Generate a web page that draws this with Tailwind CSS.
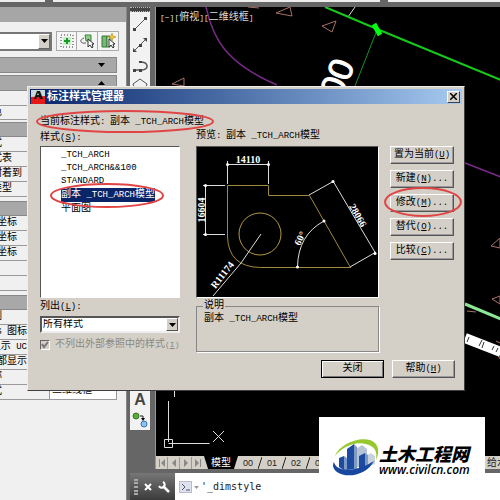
<!DOCTYPE html>
<html lang="zh-CN">
<head>
<meta charset="utf-8">
<title>标注样式管理器</title>
<script src="https://cdn.jsdelivr.net/npm/@tailwindcss/browser@4"></script>
</head>
<body class="bg-[#666] text-black text-[10px] leading-3 font-['Liberation_Mono','Noto_Sans_CJK_SC',sans-serif]">
<div class="relative flex h-screen flex-col overflow-hidden">
  <!-- application frame -->
  <div class="flex h-[2px] shrink-0 gap-2 bg-[#666]">
    <div class="w-[45px] bg-[#eee]"></div><div class="flex-1 bg-[#eee]"></div><div class="w-[112px] bg-[#eee]"></div>
  </div>
  <div class="flex min-h-0 flex-1 pt-[5px]">

    <!-- properties palette -->
    <aside class="flex w-[127px] shrink-0 flex-col overflow-hidden border-r border-[#888] bg-[#f0f0f0]">
      <div class="h-[15px] shrink-0 bg-[#a6a6a6]"></div>
      <div class="mt-[9px] flex h-5 shrink-0 items-center">
        <label class="relative block w-[52px]">
          <select aria-label="对象类型" class="block h-[19px] w-full appearance-none border-2 border-l-0 border-[#777] bg-white"><option></option></select>
          <span class="pointer-events-none absolute inset-y-[2px] right-[2px] flex w-3 items-center justify-center border border-t-white border-l-white border-r-[#666] border-b-[#666] bg-[#d4d0c8]"><svg class="w-[7px] h-1" viewBox="0 0 7 4"><path d="M0 0h7L3.500 4z"/></svg></span>
        </label>
        <div class="ml-1 flex border border-[#aaa] bg-[#f5f5f5]">
          <button aria-label="切换" class="flex h-[18px] w-5 items-center justify-center border-r border-[#aaa]"><svg class="w-4 h-4" viewBox="0 0 16 16" fill="none"><rect x="2" y="2" width="12" height="12" stroke="#333" stroke-dasharray="1 2"/><rect x="4" y="4" width="8" height="8" fill="#c4efc4"/><path d="M8 5v6M5 8h6" stroke="#159a24" stroke-width="2"/></svg></button>
          <button aria-label="选择对象" class="flex h-[18px] w-[21px] items-center justify-center border-r border-[#aaa]"><svg class="w-4 h-4" viewBox="0 0 16 16" fill="none"><path d="M6 2h6v6H7z" fill="#8bcf8b" stroke="#3c843c"/><path d="M5 5c-5 2-4 6 2 5" stroke="#555"/><path d="M9 6v8l2-2 2 3 1-1-1-3h2z" fill="#fff" stroke="#333"/></svg></button>
          <button aria-label="快速选择" class="flex h-[18px] w-5 items-center justify-center"><svg class="w-4 h-4" viewBox="0 0 16 16" fill="none"><path d="M2 3h5v11H2z" fill="#74b974" stroke="#397739"/><path d="M7 3h3v11H7z" fill="#d9eed9" stroke="#397739"/><path d="M9 6v8l2-2 2 3 1-1-1-3h2z" fill="#fff" stroke="#333"/><path d="M12 0l1 3 3 1-3 1-1 3-1-3-3-1 3-1z" fill="#f3c62f" stroke="#a77b12" stroke-width=".5"/></svg></button>
        </div>
      </div>
      <div class="mt-[6px] mr-[9px] flex h-4 shrink-0 items-center justify-end border border-l-0 border-[#888] bg-[#a8a8a8] pr-[11px]"><svg class="h-1 w-[7px]" viewBox="0 0 7 4"><path d="M0 0h7L3.500 4z"/></svg></div>
      <div class="mt-[2px] mr-[9px] flex h-4 shrink-0 items-center justify-end border border-l-0 border-[#888] bg-[#a8a8a8] pr-[11px]"><svg class="h-1 w-[7px]" viewBox="0 0 7 4"><path d="M0 4h7L3.500 0z"/></svg></div>
      <ul class="mr-[9px] shrink-0 pt-[14px]">
        <li class="flex h-[15px] items-center border-y border-[#999]"><span class="flex w-[2px] justify-end">色</span></li>
      </ul>
      <div class="mt-[2px] mr-[9px] h-[15px] shrink-0 border-y border-[#888] bg-[#a8a8a8]"></div>
      <ul class="mr-[9px] shrink-0 *:flex *:h-[15px] *:items-center *:border-b *:border-[#999] *:whitespace-nowrap">
        <li><span class="flex w-[2px] justify-end">式</span></li>
        <li><span class="flex w-3 justify-end">样式表</span></li>
        <li><span class="flex w-[22px] justify-end">表附着到</span></li>
        <li><span class="flex w-3 justify-end">表类型</span></li>
      </ul>
      <div class="mt-1 mr-[9px] h-[15px] shrink-0 border-y border-[#888] bg-[#a8a8a8]"></div>
      <ul class="mr-[9px] shrink-0 *:flex *:h-[15px] *:items-center *:border-b *:border-[#999] *:whitespace-nowrap">
        <li><span class="flex w-[17px] justify-end">X 坐标</span></li>
        <li><span class="flex w-[17px] justify-end">Y 坐标</span></li>
        <li><span class="flex w-[17px] justify-end">Z 坐标</span></li>
        <li></li>
        <li></li>
      </ul>
      <div class="mt-1 mr-[9px] h-[15px] shrink-0 border-y border-[#888] bg-[#a8a8a8]"></div>
      <ul class="mr-[9px] shrink-0 *:flex *:h-[15px] *:items-center *:border-b *:border-[#999] *:whitespace-nowrap">
        <li><span class="flex w-[2px] justify-end">例</span></li>
        <li><span class="flex w-[27px] justify-end"><span class="text-[9px]">UCS&nbsp;</span>图标</span></li>
        <li><span class="flex w-[27px] justify-end">显示<span class="text-[9px]">&nbsp;UC</span></span></li>
        <li><span class="flex w-[27px] justify-end">口都显示</span></li>
        <li><span class="flex w-[2px] justify-end">称</span></li>
        <li><span class="flex w-[2px] justify-end">式</span><span class="ml-[47px] flex-1 self-stretch border-x border-[#999] bg-white pl-[2px]">二维线框</span></li>
      </ul>
    </aside>

    <div class="flex min-w-0 flex-1 flex-col">
      <div class="flex min-h-0 flex-1">
        <!-- draw toolbar -->
        <div class="w-7 shrink-0 px-[3px]">
          <div class="flex h-[423px] w-5 flex-col items-center bg-[#f2f2f2]">
            <div class="h-[5px] w-full border-y border-dotted border-[#bbb] bg-[#444]"></div>
            <button aria-label="直线" class="mt-1"><svg class="size-4" viewBox="0 0 16 16" fill="none"><path d="M2 14L14 2" stroke="#555"/><path d="M1 12h3v3H1zM12 1h3v3h-3z" fill="#444"/></svg></button>
            <button aria-label="构造线" class="mt-[5px]"><svg class="size-4" viewBox="0 0 16 16" fill="none"><path d="M2 14L14 2" stroke="#555"/><path d="M1 11v4h4zM11 1h4v4zM7 7h3v3H7z" fill="#444"/></svg></button>
            <button aria-label="多段线" class="mt-[5px]"><svg class="size-4" viewBox="0 0 16 16" fill="none"><path d="M2 12h7M8 4c9 0 9 7 2 8" stroke="#555" stroke-width="1.500"/><path d="M1 11h3v3H1zM7 11h3v3H7zM7 3h3v2H7z" fill="#444"/></svg></button>
            <button aria-label="多边形" class="mt-[4px]"><svg class="size-4" viewBox="0 0 16 16" fill="none"><path d="M8 1l7 5-3 8H4L1 6z" stroke="#555"/></svg></button>
            <button aria-label="多行文字" class="mt-auto text-[16px] leading-4 font-bold text-[#444] font-['Liberation_Sans',sans-serif]">A</button>
            <button aria-label="添加选定对象" class="mt-1 mb-[2px]"><svg class="size-4" viewBox="0 0 16 16"><circle cx="4" cy="4" r="3" fill="#5aac3b" stroke="#37702a"/><circle cx="12" cy="12" r="3" fill="#8cc4ef" stroke="#3970b1"/><path d="M8 4h3v3" fill="none" stroke="#222"/><path d="M9 6h4l-2 3z"/></svg></button>
          </div>
        </div>

        <!-- drawing canvas -->
        <main class="flex min-w-0 flex-1 flex-col border-l border-[#999]">
          <div class="relative min-h-0 flex-1 overflow-hidden bg-black">
            <svg class="absolute top-0 left-0 h-[449px] w-[345px]" viewBox="156 7 345 449" fill="none">
              <path d="M206 7C213 39 226 63 277 85M465 163l36 14" stroke="#762a85" stroke-width="1.500"/>
              <path d="M325 7l22 9" stroke="#876020"/>
              <path d="M348 17l7-10" stroke="#cfe8cf"/>
              <path d="M325 7L377 29 501 80" stroke="#18c81c" stroke-width="2"/>
              <path d="M377 30L355 86" stroke="#16912b"/>
              <path d="M374 24l6 11" stroke="#0f1" stroke-width="5"/>
              <g stroke="#a87068"><path d="M276 13l14-6 2 9zM322 26l14-5-4 11zM172 84l12-6v8zM248 7l11 1M491 246l9-8v10zM492 299l8-3v8zM467 311l9 1M496 341l4 2M498 355l2 4"/></g>
              <path d="M465 304l36 15" stroke="#8ce696" stroke-width="3"/>
              <path d="M465 338l36 14" stroke="#fff" stroke-width="10"/>
              <path d="M467 342l2-5M479 346l3-6M482 348l2-6M492 350l2-4M496 352l2-4" stroke="#333"/>
              <text x="0" y="0" transform="translate(341 100) rotate(-68)" fill="#fff" stroke="#fff" font-size="34" font-family="Liberation Sans, sans-serif">00</text>
              <g stroke="#ddd"><path d="M168.500 401v41M168.500 443.500h41M174.500 391v6M213 431l11 11M224 431l-11 11"/><path d="M164.500 439.500h8v8h-8z" stroke-width="1"/></g>
            </svg>
            <p class="relative pt-[5px] pl-1 text-[#ddd]"><span class="text-[8px]">[−][</span>俯视<span class="text-[8px]">][</span>二维线框<span class="text-[8px]">]</span></p>
          </div>
          <!-- layout tabs -->
          <nav class="flex h-[13px] shrink-0 items-center overflow-hidden bg-[#d4d0c8] text-[9px] whitespace-nowrap text-[#222] font-['Liberation_Sans','Noto_Sans_CJK_SC',sans-serif]">
            <button aria-label="第一个" class="flex h-3 w-3 items-center justify-center border-r border-[#999]"><svg class="size-2" viewBox="0 0 8 8"><path d="M1 0h1v8H1zM7 0v8L3 4z" fill="#888"/></svg></button>
            <button aria-label="上一个" class="flex h-3 w-3 items-center justify-center border-r border-[#999]"><svg class="size-2" viewBox="0 0 8 8"><path d="M6 0v8L2 4z" fill="#888"/></svg></button>
            <button aria-label="下一个" class="flex h-3 w-3 items-center justify-center border-r border-[#999]"><svg class="size-2" viewBox="0 0 8 8"><path d="M2 0v8l4-4z" fill="#888"/></svg></button>
            <button aria-label="最后一个" class="flex h-3 w-3 items-center justify-center"><svg class="size-2" viewBox="0 0 8 8"><path d="M6 0h1v8H6zM1 0v8l4-4z" fill="#888"/></svg></button>
            <a href="#" class="flex h-full w-[34px] items-center justify-center bg-black text-[10px] text-white [clip-path:polygon(0_0,100%_0,88%_100%,12%_100%)]">模型</a>
            <a href="#" class="w-5 text-center">00</a><svg class="h-3 w-1" viewBox="0 0 4 12"><path d="M0 12L4 0" stroke="#222"/></svg>
            <a href="#" class="w-5 text-center">01</a><svg class="h-3 w-1" viewBox="0 0 4 12"><path d="M0 12L4 0" stroke="#222"/></svg>
            <a href="#" class="w-5 text-center">02</a><svg class="h-3 w-1" viewBox="0 0 4 12"><path d="M0 12L4 0" stroke="#222"/></svg>
            <a href="#" class="w-5 text-center">03</a>
            <a href="#" class="ml-auto w-[13px] text-[10px]">给水</a>
          </nav>
        </main>
      </div>
      <!-- command line -->
      <div class="mt-1 ml-[3px] flex h-[27px] shrink-0 items-center bg-white">
        <div class="flex h-full w-[45px] shrink-0 items-center gap-[6px] bg-linear-to-b from-[#777] to-[#3c3c3c] pl-1">
          <div class="h-4 w-1 shrink-0 border-x-2 border-dotted border-[#aaa]"></div>
          <button aria-label="关闭命令行"><svg class="size-2" viewBox="0 0 8 8"><path d="M1 1l6 6M7 1L1 7" stroke="#fff" stroke-width="2"/></svg></button>
          <button aria-label="自定义" class="shrink-0"><svg class="size-3" viewBox="0 0 12 12" fill="none"><path d="M5 5l6 6" stroke="#fff" stroke-width="2.500"/><path d="M5 1a3 3 0 1 1-4 4" stroke="#fff" stroke-width="2"/></svg></button>
        </div>
        <svg class="ml-1 h-3 w-5 shrink-0" viewBox="0 0 20 12" fill="none"><rect x=".5" y=".5" width="12" height="11" fill="#dde2ee" stroke="#bbc"/><path d="M3 3l3 3-3 3M7 9h4" stroke="#556"/><path d="M15 5h5l-2.500 3z" fill="#999"/></svg>
        <input aria-label="命令" value="'_dimstyle" class="ml-[2px] w-28 min-w-0 text-[10px] leading-4 text-[#222] outline-none font-['DejaVu_Sans_Mono',monospace]">
      </div>
    </div>
  </div>

  <!-- dimension style dialog -->
  <section role="dialog" aria-labelledby="dlg" class="absolute top-[86px] left-[27px] flex w-[438px] flex-col border border-t-[#eee] border-l-[#eee] border-r-[#404040] border-b-[#404040] bg-[#d4d0c8] p-[2px] pb-3">
    <header class="flex h-[15px] items-center bg-linear-to-r from-[#0a246a] to-[#a6caf0] pr-[2px] pl-[1px] text-white">
      <svg class="h-[14px] w-[14px]" viewBox="0 0 14 14"><path d="M0 0h14v14H0z" fill="#c9dada"/><path d="M0 7l14-1v8H0z" fill="#e51a18"/><path d="M3 9L6 1h3l3 8H9L8 7H6L5 9zM7 3L6 5h2z" fill="#161616" fill-rule="evenodd"/></svg>
      <h1 id="dlg" class="ml-[2px] flex-1 text-[11px] leading-[14px] font-bold">标注样式管理器</h1>
      <button aria-label="关闭" class="flex h-3 w-[13px] items-center justify-center border border-t-white border-l-white border-r-[#404040] border-b-[#404040] bg-[#d4d0c8]"><svg class="size-[7px]" viewBox="0 0 7 7"><path d="M0 0l7 7M7 0L0 7" stroke="#000" stroke-width="1.500"/></svg></button>
    </header>

    <div class="relative mt-3 ml-[10px] flex h-3 items-center">
      <p>当前标注样式<span class="text-[9px]">:&ensp;</span>副本<span class="text-[9px]"> _TCH_ARCH</span>模型</p>
      <svg class="pointer-events-none absolute -top-[6px] -left-1 h-[23px] w-[178px]" viewBox="0 0 178 23" fill="none"><ellipse cx="89" cy="11.500" rx="88" ry="10.500" stroke="#e04444" stroke-width="2"/></svg>
    </div>

    <div class="flex pr-2 pl-[10px]">
      <div class="flex w-[140px] flex-col">
        <label for="styles" class="mt-1 mb-[2px]">样式<span class="text-[9px]">(<u>S</u>):</span></label>
        <div class="relative">
          <ul id="styles" role="listbox" class="h-[152px] border border-t-[#555] border-l-[#555] border-r-white border-b-white bg-white pt-[2px] pl-5 leading-[13px]">
            <li role="option" class="text-[9px]">_TCH_ARCH</li>
            <li role="option" class="text-[9px]">_TCH_ARCH&amp;&amp;100</li>
            <li role="option" class="text-[9px]">STANDARD</li>
            <li role="option" aria-selected="true" class="w-fit bg-[#0a246a] text-white">副本<span class="text-[9px]"> _TCH_ARCH</span>模型</li>
            <li role="option">平面图</li>
          </ul>
          <svg class="pointer-events-none absolute top-[37px] left-[10px] h-[25px] w-[114px]" viewBox="0 0 114 25" fill="none"><ellipse cx="57" cy="12.500" rx="56" ry="11.500" stroke="#e04444" stroke-width="2"/></svg>
        </div>
        <label for="filter" class="my-[3px]">列出<span class="text-[9px]">(<u>L</u>):</span></label>
        <div class="relative">
          <select id="filter" class="block h-[17px] w-full appearance-none border-2 border-t-[#555] border-l-[#555] border-r-[#eee] border-b-[#eee] bg-white pl-[1px] text-[10px] leading-3"><option>所有样式</option></select>
          <span class="pointer-events-none absolute inset-y-[2px] right-[2px] flex w-3 items-center justify-center border border-t-white border-l-white border-r-[#555] border-b-[#555] bg-[#d4d0c8]"><svg class="h-1 w-[7px]" viewBox="0 0 7 4"><path d="M0 0h7L3.500 4z"/></svg></span>
        </div>
        <label class="mt-[6px] flex items-center whitespace-nowrap text-[#8a8880]">
          <span class="relative mr-[5px] size-[10px]"><input type="checkbox" checked disabled class="block size-[10px] appearance-none border border-t-[#666] border-l-[#666] border-r-white border-b-white bg-[#d4d0c8]"><svg class="absolute inset-0 size-[10px]" viewBox="0 0 10 10"><path d="M2 4l2 3 4-5" fill="none" stroke="#777" stroke-width="2"/></svg></span>
          不列出外部参照中的样式<span class="text-[8px]">(<u>I</u>)</span>
        </label>
      </div>

      <div class="ml-4 flex w-[183px] flex-col">
        <p class="mt-[2px] mb-1">预览<span class="text-[9px]">:&ensp;</span>副本<span class="text-[9px]"> _TCH_ARCH</span>模型</p>
        <div class="h-[152px] border border-t-[#555] border-l-[#555] border-r-white border-b-white bg-black">
          <svg class="block h-[150px] w-[181px]" viewBox="197 147 181 150" fill="none">
            <path d="M227.500 185.500h41v10h41l41 72h-90Q228 267 227.500 236z" stroke="#a08a3c"/>
            <circle cx="260" cy="234" r="21" stroke="#b39a42"/>
            <g stroke="#ddd"><path d="M227.500 184v-23M268.500 184v-23M227 164.500h42M205.500 185v50M203 185.500h22M203 234.500h22M309 195l25-14M350 267l26-15M333 181l43 73M261 234l-20 29-28 33M324 221Q298 235 297.500 267"/></g>
            <g fill="#fff"><circle cx="227.500" cy="164.500" r="1.500"/><circle cx="268.500" cy="164.500" r="1.500"/><circle cx="205.500" cy="185.500" r="1.500"/><circle cx="205.500" cy="234.500" r="1.500"/><circle cx="333" cy="181.500" r="1.500"/><circle cx="375" cy="253.500" r="1.500"/><circle cx="324" cy="221" r="1.500"/><circle cx="297.500" cy="267" r="1.500"/></g>
            <g fill="#fff" font-family="Liberation Serif, serif" font-weight="bold" font-size="10" text-anchor="middle">
              <text x="248" y="163">14110</text>
              <text transform="translate(205 210) rotate(-90)">16604</text>
              <text transform="translate(355 217) rotate(60)">28066</text>
              <text transform="translate(303 240) rotate(-62)">60°</text>
              <text transform="translate(225 277) rotate(-52)">R11174</text>
            </g>
          </svg>
        </div>
        <fieldset class="mt-[2px] h-[52px] border border-[#888] px-[6px] shadow-[1px_1px_0_#fff]">
          <legend class="px-[1px]">说明</legend>
          <p class="mt-[1px] pl-[1px]">副本<span class="text-[9px]"> _TCH_ARCH</span>模型</p>
        </fieldset>
      </div>

      <div class="relative mt-[18px] ml-[11px] flex flex-1 flex-col gap-[6px] *:[button]:h-[18px] *:[button]:border *:[button]:border-t-white *:[button]:border-l-white *:[button]:border-r-[#555] *:[button]:border-b-[#555] *:[button]:shadow-[inset_-1px_-1px_0_#999] *:[button]:whitespace-nowrap">
        <button>置为当前<span class="text-[9px]">(<u>U</u>)</span></button>
        <button>新建<span class="text-[9px]">(<u>N</u>)...</span></button>
        <button>修改<span class="text-[9px]">(<u>M</u>)...</span></button>
        <button>替代<span class="text-[9px]">(<u>O</u>)...</span></button>
        <button>比较<span class="text-[9px]">(<u>C</u>)...</span></button>
        <svg class="pointer-events-none absolute top-[41px] -left-[6px] h-[30px] w-[78px]" viewBox="0 0 78 30" fill="none"><ellipse cx="39" cy="15" rx="38" ry="14" stroke="#e04444" stroke-width="2"/></svg>
      </div>
    </div>

    <footer class="mt-2 flex justify-end gap-2 pr-[7px]">
      <button class="h-[18px] w-[63px] border border-black shadow-[inset_1px_1px_0_#fff,inset_-1px_-1px_0_#777]">关闭</button>
      <button class="h-[18px] w-[63px] border border-t-white border-l-white border-r-[#555] border-b-[#555] shadow-[inset_-1px_-1px_0_#999]">帮助<span class="text-[9px]">(<u>H</u>)</span></button>
    </footer>
  </section>

  <!-- site badge -->
  <div class="absolute right-[15px] bottom-0 flex h-[83px] w-[166px] items-start bg-white pt-[22px] pl-[14px] text-black">
    <svg class="h-[38px] w-[46px] shrink-0" viewBox="0 0 46 38">
      <path d="M2 17C7 4 32-5 42 4c4 4 4 11 1 17 1-7 0-11-5-14C25 0 9 8 2 17z" fill="#96c82d"/>
      <path d="M23 10l6-4 5 4v18H23z" fill="#b5c3d2"/><path d="M33 17l5-3 4 3v8l-9 3z" fill="#c8d2dc"/>
      <path d="M6 19l5-2v14l-5-3zM14 10l7-5v25l-7 1zM26 17l6-3v14l-6 3z" fill="#1d4b9f"/><path d="M21 5l3 3v22h-3zM11 17l3 2v12h-3zM32 14l3 2v11l-3 1z" fill="#7d9ac7"/>
      <path d="M1 23c2 10 21 11 40-1C34 36 14 40 4 33 0 30-1 26 1 23z" fill="#17479e"/>
    </svg>
    <div class="pt-[4px] whitespace-nowrap italic">
      <p class="text-[18px] leading-5 font-black font-['Noto_Sans_CJK_SC',sans-serif]">土木工程网</p>
      <p class="text-[12px] leading-[14px] font-semibold font-['Open_Sans',sans-serif]">www.civilcn.com</p>
    </div>
  </div>
</div>
</body>
</html>
